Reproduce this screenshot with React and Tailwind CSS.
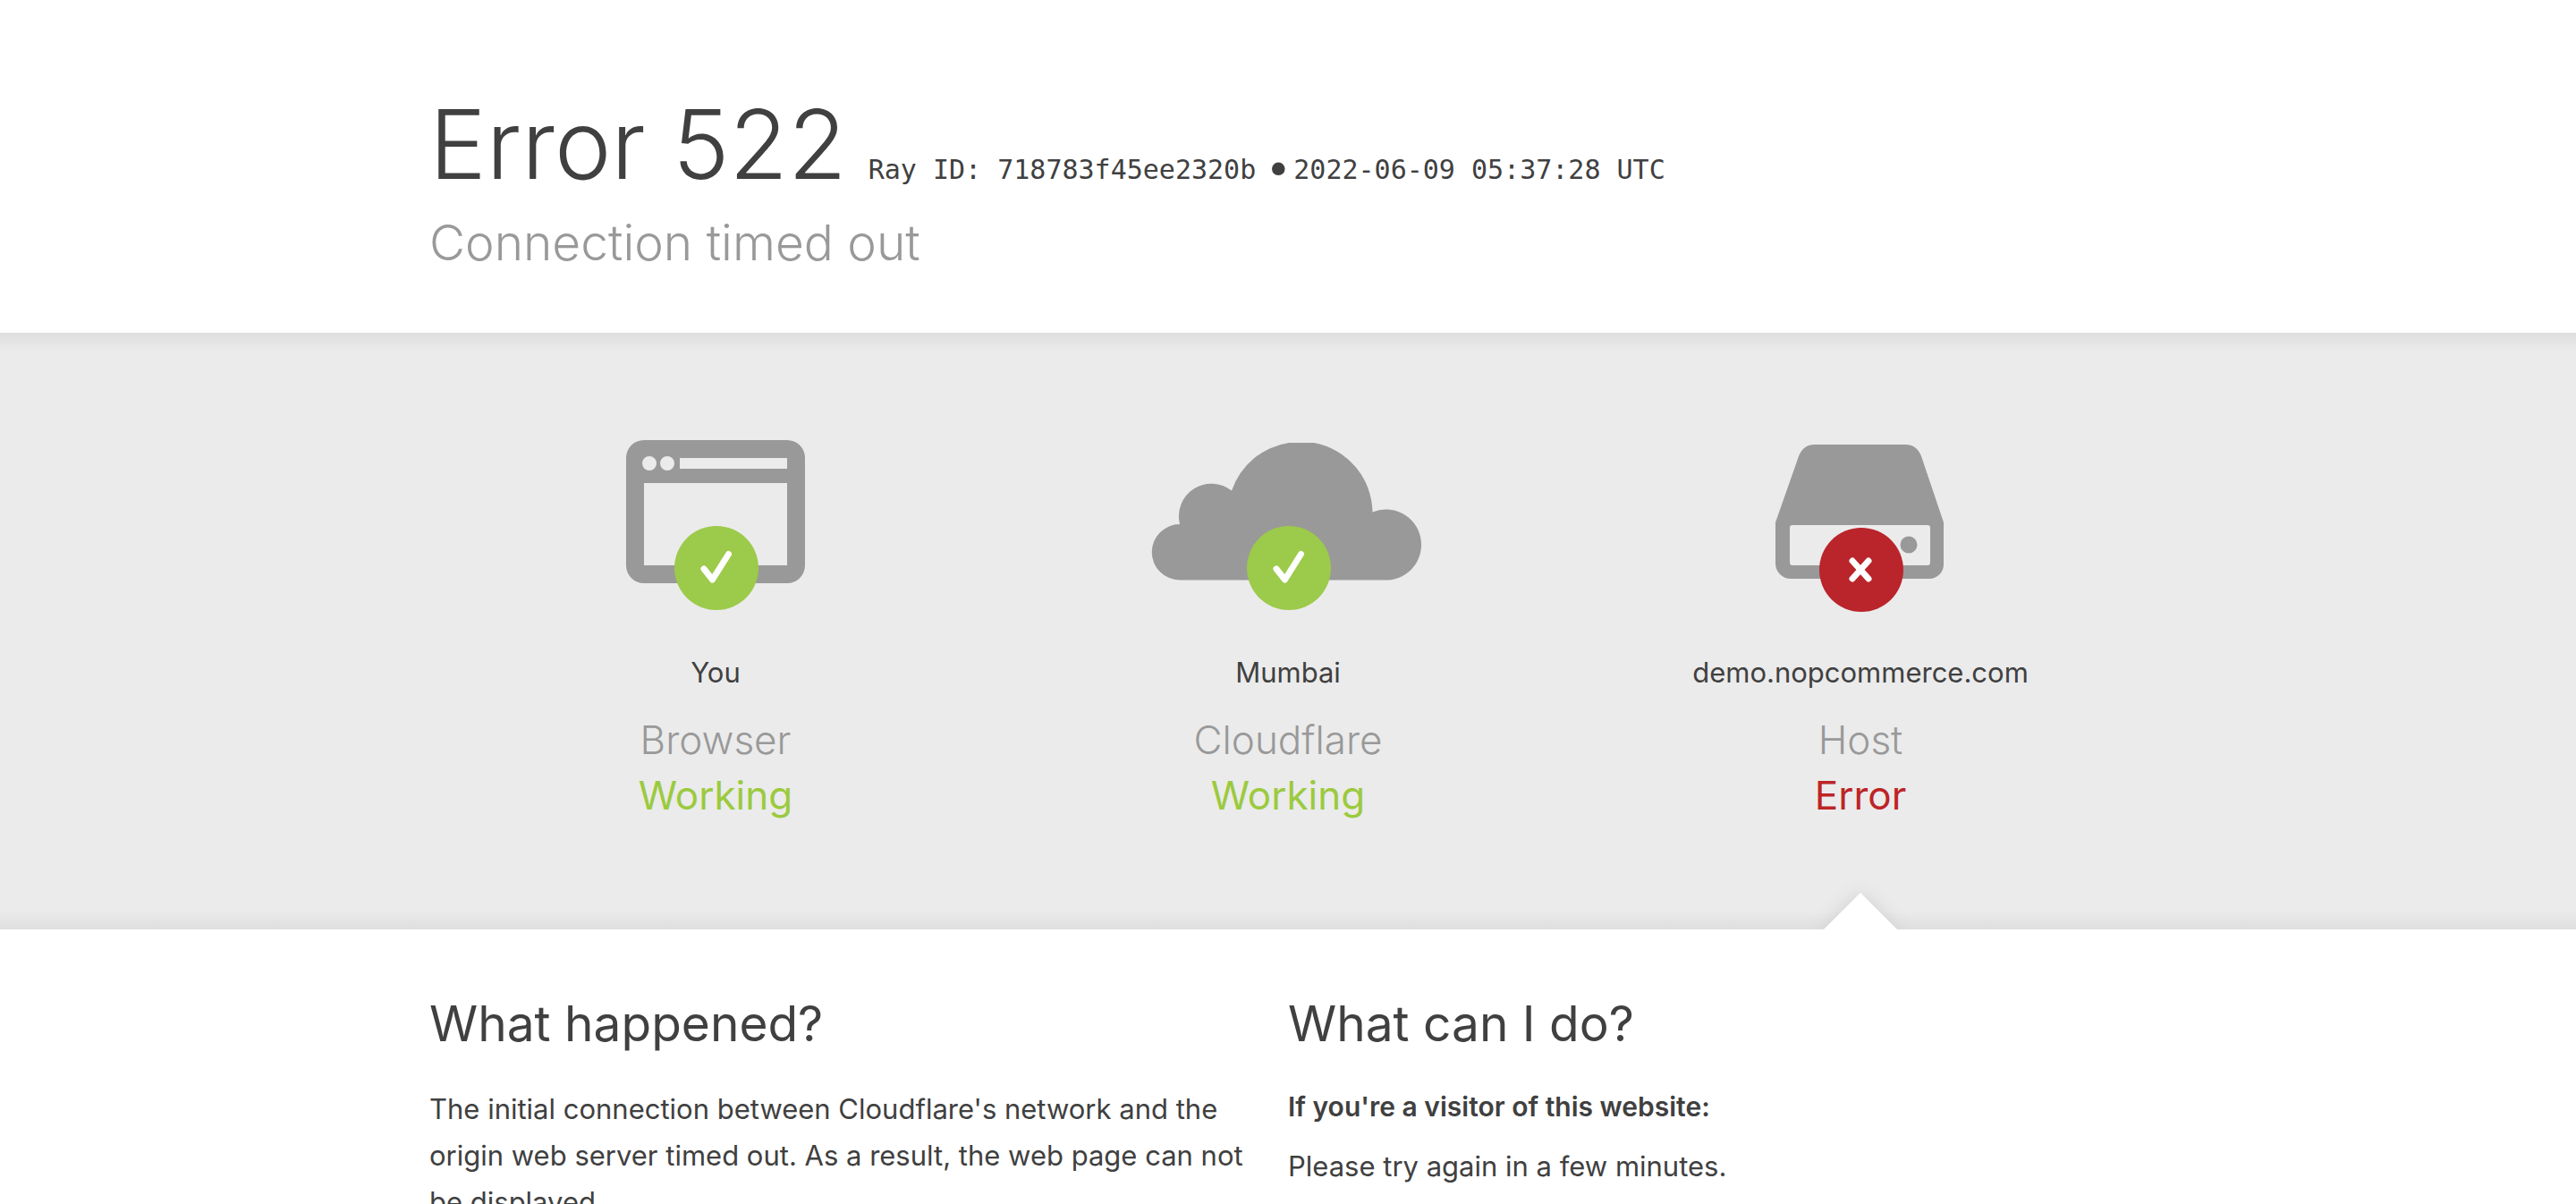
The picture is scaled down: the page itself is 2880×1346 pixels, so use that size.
const items = [
  { icon: "browser", place: "You", name: "Browser", status: "Working", ok: true },
  { icon: "cloud", place: "Mumbai", name: "Cloudflare", status: "Working", ok: true },
  { icon: "server", place: "demo.nopcommerce.com", name: "Host", status: "Error", ok: false },
];

function Shape({ icon }) {
  if (icon === "browser")
    return (
      <path
        fill="#999999"
        fillRule="evenodd"
        d="M90 22H250A20 20 0 0 1 270 42V162A20 20 0 0 1 250 182H90A20 20 0 0 1 70 162V42A20 20 0 0 1 90 22ZM90 70V132V162H250V70ZM130 42V54H250V42ZM96 40A8 8 0 1 0 96 56A8 8 0 1 0 96 40ZM116 40A8 8 0 1 0 116 56A8 8 0 1 0 116 40Z"
      />
    );
  if (icon === "cloud")
    return (
      <path
        fill="#999999"
        d="M49 116A31 31 0 0 0 49 178.500H281A39.500 39.500 0 1 0 264.500 102.500A80 80 0 0 0 199 25H171A80 80 0 0 0 107 78.500A36.500 36.500 0 0 0 49 116Z"
      />
    );
  return (
    <path
      fill="#999999"
      fillRule="evenodd"
      d="M119 27H220Q233 27 238 40L263 114V161A16 16 0 0 1 247 177H92A17 17 0 0 1 75 160V114L101 40Q106 27 119 27ZM94 117Q91 117 91 120V159Q91 162 94 162H245Q248 162 248 159V120Q248 117 245 117ZM224 129.500A9.500 9.500 0 1 1 224 148.500A9.500 9.500 0 1 1 224 129.500Z"
    />
  );
}

function StatusItem({ icon, place, name, status, ok }) {
  return (
    <div className="relative flex flex-col items-center text-center">
      <svg className="h-[230px] w-[340px]" viewBox="0 0 340 230" aria-hidden="true">
        <Shape icon={icon} />
        <circle cx="171" cy={ok ? 165 : 167} r="47" fill={ok ? "#9cca4a" : "#ba242b"} />
        <path
          d={ok ? "M157 166L166.500 178L184.500 149.500" : "M161 157L179 177M179 157L161 177"}
          fill="none"
          stroke="#ffffff"
          strokeWidth="7"
          strokeLinecap="round"
          strokeLinejoin="round"
        />
      </svg>
      <span className="mt-[26px] text-[31px] leading-[52px]">{place}</span>
      <h3 className="mt-[18px] text-[44px] leading-[62px] font-light text-[#999999]">{name}</h3>
      <span className={ok ? "text-[44px] leading-[62px] text-[#9bca3e]" : "text-[44px] leading-[62px] text-[#bd2426]"}>
        {status}
      </span>
      {!ok && (
        <div className="absolute -bottom-[119px] flex h-[80px] w-[160px] justify-center overflow-hidden">
          <div className="mt-[51px] size-[58px] shrink-0 rotate-45 bg-white shadow-[0_0_20px_#cfcfcf]" />
        </div>
      )}
    </div>
  );
}

export default function App() {
  return (
    <div className="h-screen overflow-hidden bg-white font-[Inter,sans-serif] text-[#404040]">
      <header className="mx-auto max-w-[1920px] pt-[86px] pb-[66px]">
        <h1 className="flex flex-wrap items-baseline gap-x-6">
          <span className="text-[107px] leading-[150px] font-light">Error 522</span>
          <span className="flex items-center font-['DejaVu_Sans_Mono',monospace] text-[30px] leading-[40px]">
            <span>Ray ID: 718783f45ee2320b</span>
            <span className="mr-0.5 ml-2.5 text-[50px]">•</span>
            <span>2022-06-09 05:37:28 UTC</span>
          </span>
        </h1>
        <h2 className="text-[55px] leading-[70px] font-light text-[#999999]">Connection timed out</h2>
      </header>
      <section className="bg-[linear-gradient(to_bottom,#dedede,#ebebeb_3%,#ebebeb_97%,#dedede)] pt-[98px] pb-[119px]">
        <div className="mx-auto grid max-w-[1920px] grid-cols-3">
          {items.map((item) => (
            <StatusItem key={item.icon} {...item} />
          ))}
        </div>
      </section>
      <main className="mx-auto grid max-w-[1920px] grid-cols-2 pt-[67px]">
        <section className="pr-10">
          <h2 className="text-[55px] leading-[76px]">What happened?</h2>
          <p className="mt-8 text-[31px] leading-[52px]">
            The initial connection between Cloudflare's network and the origin web server timed out. As a result, the
            web page can not be displayed.
          </p>
        </section>
        <section>
          <h2 className="text-[55px] leading-[76px]">What can I do?</h2>
          <h3 className="mt-8 text-[30px] leading-[46px] font-semibold">If you're a visitor of this website:</h3>
          <p className="mt-[18px] text-[31px] leading-[52px]">Please try again in a few minutes.</p>
        </section>
      </main>
    </div>
  );
}
